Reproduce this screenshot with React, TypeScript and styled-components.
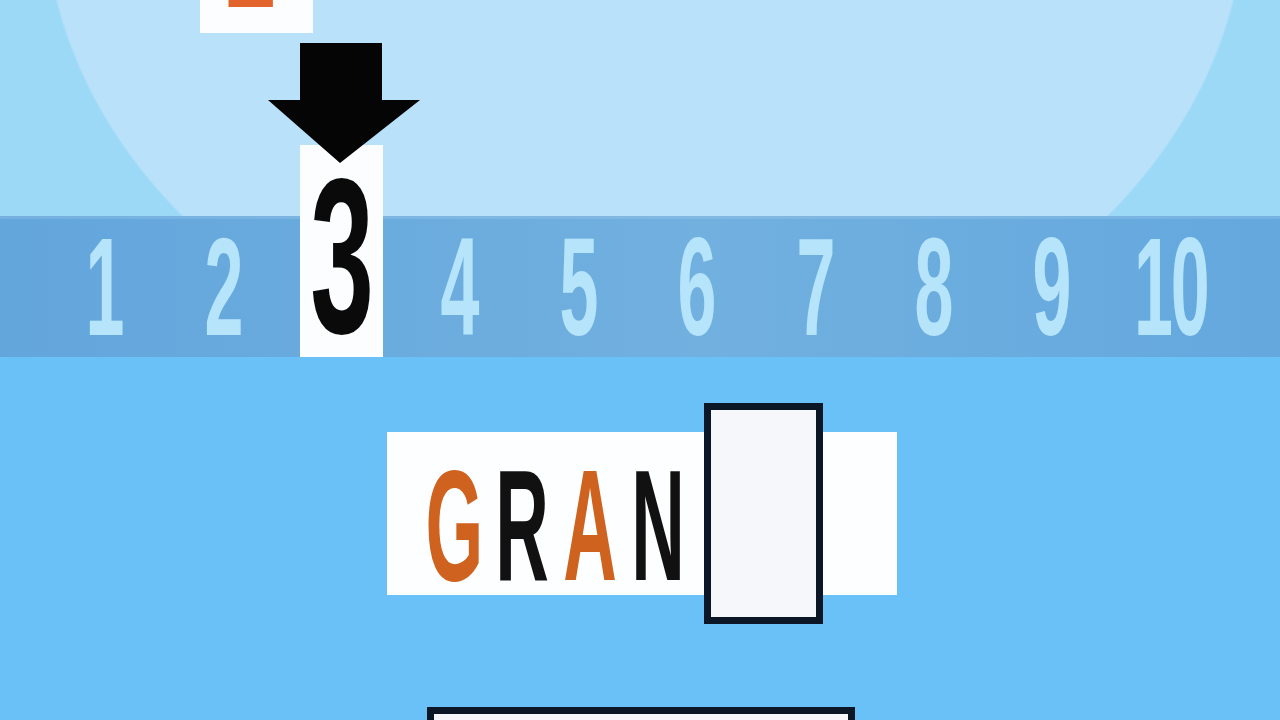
import React from 'react';
import styled, { createGlobalStyle } from 'styled-components';

const GlobalStyle = createGlobalStyle`
  html, body {
    margin: 0;
    padding: 0;
    overflow: hidden;
  }
  * {
    box-sizing: border-box;
  }
`;

const numbers = ['1', '2', '3', '4', '5', '6', '7', '8', '9', '10'];
const activeNumber = '3';

const word = [
  { ch: 'G', color: '#d0621f' },
  { ch: 'R', color: '#111111' },
  { ch: 'A', color: '#d0621f' },
  { ch: 'N', color: '#111111' },
];

const App: React.FC = () => {
  return (
    <Page>
      <GlobalStyle />
      <Sky>
        <Tile>
          <LetterCell>
            <TileMark $size={158} $scale={0.5} $color="#e2642c">
              E
            </TileMark>
          </LetterCell>
        </Tile>
        <Arrow viewBox="0 0 152 122" width={152} height={122}>
          <path d="M32 0 H114 V57 H152 L72 120 L0 57 H32 Z" fill="#050505" />
        </Arrow>
      </Sky>

      <Band>
        {numbers.map((n) =>
          n === activeNumber ? (
            <ActiveCell key={n}>
              <Glyph $size={220} $scale={0.52} $color="#0a0a0a" $drop={-10}>
                {n}
              </Glyph>
            </ActiveCell>
          ) : (
            <Cell key={n}>
              <Glyph
                $size={140}
                $scale={0.5}
                $color="#b6e4fb"
                $spacing={n.length > 1 ? -4 : 0}
              >
                {n}
              </Glyph>
            </Cell>
          )
        )}
      </Band>

      <Lower>
        <Strip>
          <Word>
            {word.map((l, i) => (
              <LetterCell key={i}>
                <Glyph $size={158} $scale={0.47} $color={l.color}>
                  {l.ch}
                </Glyph>
              </LetterCell>
            ))}
          </Word>
          <Slot />
        </Strip>
        <AnswerBox />
      </Lower>
    </Page>
  );
};

const Page = styled.div`
  width: 1280px;
  height: 720px;
  overflow: hidden;
  display: flex;
  flex-direction: column;
  background: #6ac1f8;
`;

const Sky = styled.div`
  height: 216px;
  flex-shrink: 0;
  display: flex;
  flex-direction: column;
  align-items: flex-start;
  background: radial-gradient(
    ellipse 602px 496px at 645px -100px,
    #b9e1f9 99.6%,
    #9cd9f7 100%
  );
`;

const Tile = styled.div`
  margin-left: 200px;
  width: 113px;
  height: 33px;
  padding-left: 16px;
  overflow: hidden;
  display: flex;
  align-items: flex-start;
  background: #fbfdff;
`;

const Arrow = styled.svg`
  display: block;
  position: relative;
  z-index: 1;
  margin-left: 268px;
  margin-top: 10px;
`;

const Glyph = styled.span<{
  $size: number;
  $scale: number;
  $color: string;
  $spacing?: number;
  $drop?: number;
}>`
  display: inline-block;
  position: relative;
  font-family: 'Liberation Sans', Arial, sans-serif;
  font-weight: 700;
  font-size: ${({ $size }) => $size}px;
  line-height: 1;
  color: ${({ $color }) => $color};
  letter-spacing: ${({ $spacing }) => $spacing ?? 0}px;
  margin-bottom: ${({ $drop }) => $drop ?? 0}px;
  transform: scaleX(${({ $scale }) => $scale});
  transform-origin: center;
  white-space: nowrap;
`;

const TileMark = styled(Glyph)`
  margin-top: -127px;
`;

const Band = styled.div`
  height: 141px;
  flex-shrink: 0;
  display: grid;
  grid-template-columns: repeat(10, 118.4px);
  padding-left: 46px;
  background: linear-gradient(90deg, #63a6dc 0%, #71b0df 55%, #64a8de 100%);
  box-shadow: inset 0 3px 0 rgba(255, 255, 255, 0.12);
`;

const Cell = styled.div`
  display: flex;
  justify-content: center;
  align-items: flex-end;
  overflow: visible;
`;

const ActiveCell = styled(Cell)`
  width: 83px;
  justify-self: center;
  align-self: stretch;
  margin-top: -71px;
  background: #fbfdff;
`;

const Lower = styled.div`
  display: flex;
  flex-direction: column;
  align-items: flex-start;
  padding-left: 387px;
  padding-top: 75px;
`;

const Strip = styled.div`
  width: 510px;
  height: 163px;
  flex-shrink: 0;
  display: flex;
  align-items: center;
  padding-left: 33px;
  background: #fcfeff;
`;

const Word = styled.div`
  display: flex;
  align-self: flex-end;
  margin-bottom: -9px;
`;

const LetterCell = styled.div`
  width: 68px;
  flex-shrink: 0;
  display: flex;
  justify-content: center;
`;

const Slot = styled.div`
  width: 119px;
  height: 221px;
  flex-shrink: 0;
  margin-left: 12px;
  border: 7px solid #0b1727;
  background: #f6f7fb;
`;

const AnswerBox = styled.div`
  width: 428px;
  height: 120px;
  flex-shrink: 0;
  margin-top: 112px;
  margin-left: 40px;
  border: 7px solid #0b1727;
  background: #f6f7fb;
`;

export default App;
